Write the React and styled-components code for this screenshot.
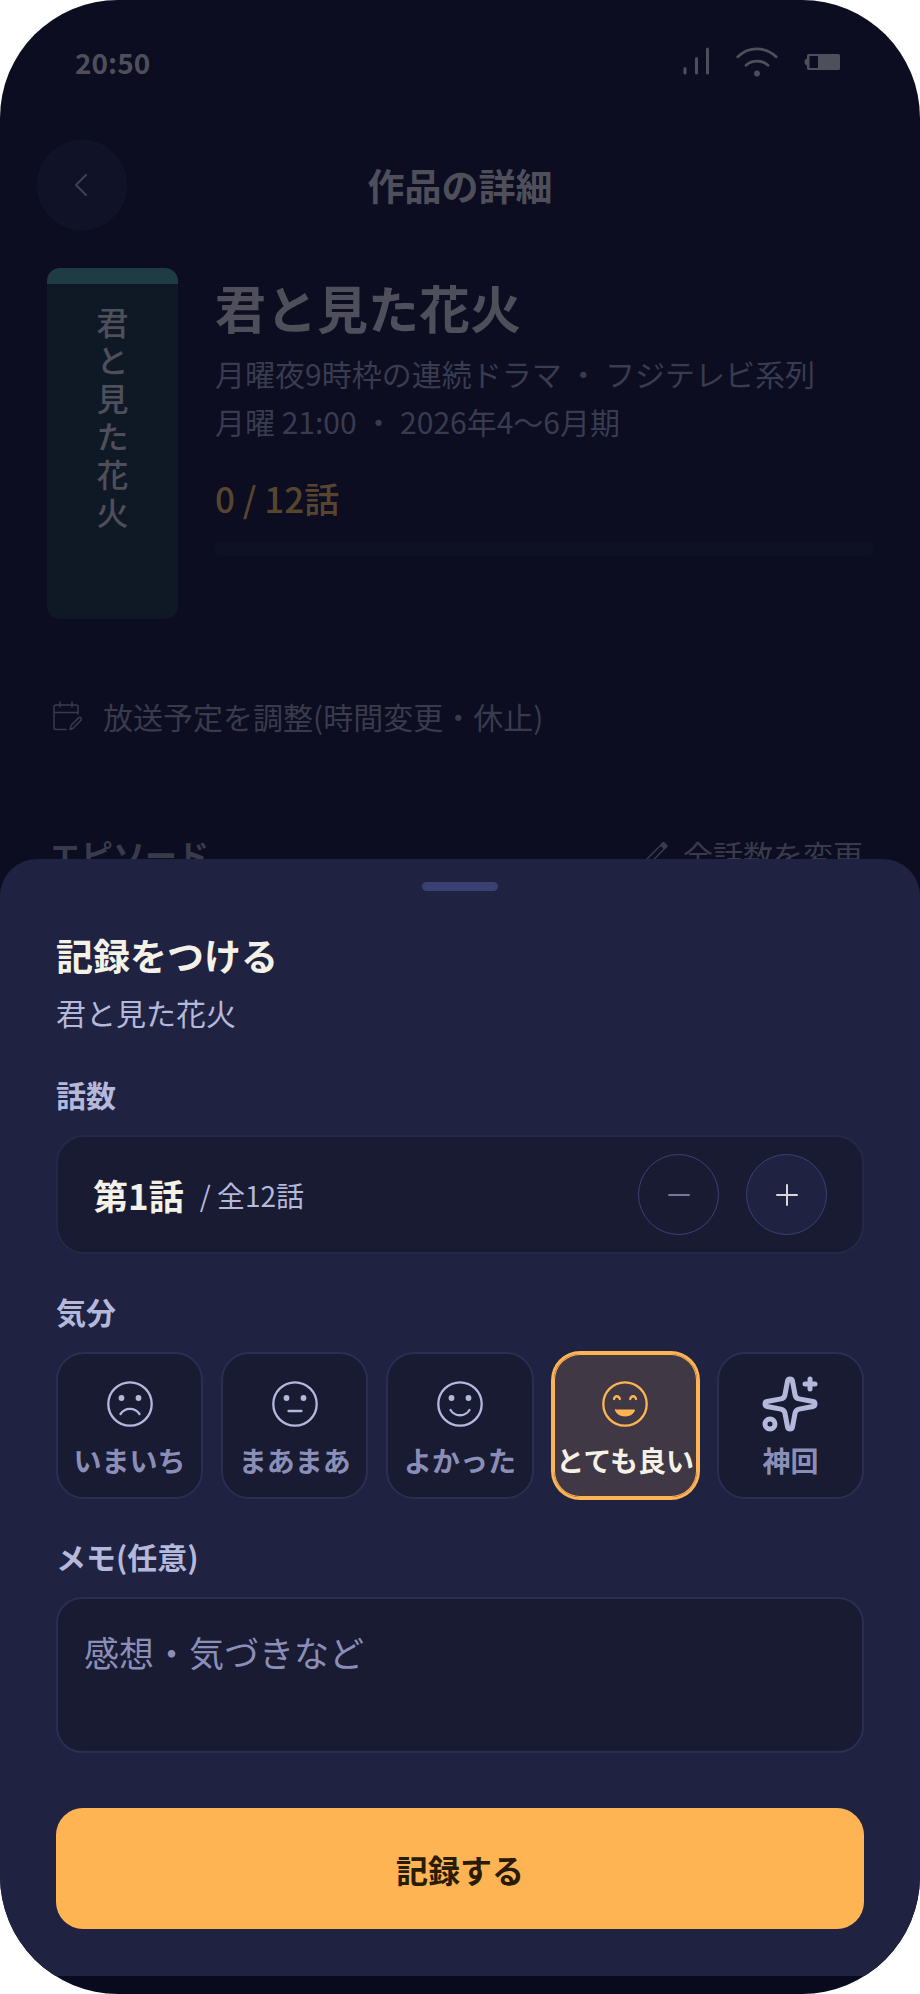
import React, { useState } from 'react'
import styled, { createGlobalStyle } from 'styled-components'
import { Sparkles } from 'lucide-react'

const GlobalStyle = createGlobalStyle`
    * {
        box-sizing: border-box;
    }

    body {
        margin: 0;
        background: #fff;
        font-family: "Noto Sans CJK JP", "Noto Sans", sans-serif;
    }

    button, textarea {
        font-family: inherit;
    }

    h1, h2, h3, p {
        margin: 0;
    }
`

// the detail screen and the sheet share a single grid cell
const Phone = styled.div`
    display: grid;
    grid-template: 1fr / minmax(0, 1fr);
    min-height: 100vh;
    border-radius: 118px;
    overflow: hidden;
    background: linear-gradient(#0c0d20 50%, #090a1e);
`

const Screen = styled.main`
    grid-area: 1 / 1;
    color: #4e4f5a;
`

const StatusBar = styled.div`
    display: flex;
    align-items: center;
    justify-content: space-between;
    height: 124px;
    padding: 0 80px 0 75px;
`

const Clock = styled.span`
    font-size: 28px;
    font-weight: 700;
`

const StatusIcons = styled.div`
    display: flex;
    align-items: center;
    gap: 26px;
`

const Header = styled.header`
    display: grid;
    grid-template-columns: 90px 1fr 90px;
    align-items: center;
    margin-top: 16px;
    padding: 0 37px;
`

const BackButton = styled.button`
    display: flex;
    align-items: center;
    justify-content: center;
    width: 90px;
    height: 90px;
    padding: 0;
    border: 1px solid #11172a;
    border-radius: 50%;
    background: #101227;
    color: #3f4158;
`

const HeaderTitle = styled.h1`
    font-size: 37px;
    line-height: 50px;
    font-weight: 700;
    text-align: center;
`

const Work = styled.section`
    display: grid;
    grid-template-columns: 131px 1fr;
    gap: 37px;
    margin-top: 38px;
    padding: 0 47px;
`

const Poster = styled.div`
    height: 351px;
    border-top: 16px solid #1f3c45;
    border-radius: 13px;
    background: #0f1925;
`

const PosterTitle = styled.div`
    width: 32px;
    margin: 18px auto 0;
    font-size: 32px;
    line-height: 38px;
    font-weight: 500;
    word-break: break-all;
`

const WorkInfo = styled.div`
    padding-top: 7px;
`

const WorkTitle = styled.h2`
    font-size: 51px;
    line-height: 64px;
    font-weight: 700;
`

const Meta = styled.p`
    margin-top: 10px;
    font-size: 30px;
    line-height: 48px;
    color: #393b50;
`

const Watched = styled.p`
    margin-top: 31px;
    font-size: 35px;
    line-height: 44px;
    font-weight: 500;
    color: #58452f;
`

const Track = styled.div`
    height: 14px;
    margin-top: 22px;
    border-radius: 4px;
    background: #0e1024;
`

const TextButton = styled.button`
    display: flex;
    align-items: center;
    gap: ${(props) => props.$gap};
    padding: 0;
    border: 0;
    background: none;
    color: #393b4c;
    font-size: 30px;
    line-height: 48px;
`

const ScheduleRow = styled.div`
    margin-top: 73px;
    padding: 0 53px;
`

const EpisodeRow = styled.div`
    display: flex;
    align-items: center;
    justify-content: space-between;
    margin-top: 90px;
    padding: 0 57px 0 49px;
    color: #393b4c;
`

const EpisodeTitle = styled.h3`
    font-size: 32px;
    line-height: 48px;
    font-weight: 700;
`

const Sheet = styled.form`
    grid-area: 1 / 1;
    align-self: end;
    display: flex;
    flex-direction: column;
    margin-bottom: 18px;
    padding: 23px 56px 47px;
    border-radius: 37px 37px 0 0;
    background: #1f2241;
    color: #b4b8da;
`

const Handle = styled.div`
    align-self: center;
    width: 76px;
    height: 9px;
    border-radius: 5px;
    background: #3b4073;
`

const SheetTitle = styled.h2`
    margin-top: 39px;
    font-size: 37px;
    line-height: 50px;
    font-weight: 700;
    color: #f4f1e6;
`

const SheetSubtitle = styled.p`
    margin: 12px 0 5px;
    font-size: 30px;
    line-height: 40px;
`

const FieldLabel = styled.label`
    margin: 37px 0 21px;
    font-size: 30px;
    line-height: 40px;
    font-weight: 700;
`

const Stepper = styled.div`
    display: flex;
    align-items: center;
    height: 119px;
    padding: 0 35px;
    border: 2px solid #242947;
    border-radius: 28px;
    background: #191b33;
`

const Episode = styled.output`
    font-size: 35px;
    font-weight: 700;
    color: #f4f1e6;
`

const Total = styled.span`
    flex: 1;
    margin-left: 16px;
    font-size: 28px;
`

const StepButton = styled.button`
    display: flex;
    align-items: center;
    justify-content: center;
    width: 81px;
    height: 81px;
    margin-left: 27px;
    padding: 0;
    border: 1px solid #3b4073;
    border-radius: 50%;
    background: #1f2241;
    color: #d8d6d6;

    &:first-of-type {
        margin-left: 0;
    }

    &:disabled {
        background: transparent;
        color: #76799b;
    }
`

const Moods = styled.div`
    display: grid;
    grid-template-columns: repeat(5, minmax(0, 1fr));
    gap: 18px;
`

const Mood = styled.label`
    display: flex;
    flex-direction: column;
    align-items: center;
    justify-content: center;
    gap: 8px;
    height: 147px;
    border: 2px solid ${(props) => (props.$selected ? '#ffb454' : '#2a2f52')};
    border-radius: 28px;
    background: ${(props) => (props.$selected ? '#403844' : '#191b33')};
    box-shadow: ${(props) =>
        props.$selected ? '0 0 0 1px #ffb454, inset 0 0 0 1px #ffb454' : 'none'};
    color: ${(props) => (props.$selected ? '#ffb454' : '#b4b8da')};
`

const HiddenRadio = styled.input.attrs({ type: 'radio' })`
    position: absolute;
    width: 1px;
    height: 1px;
    margin: 0;
    opacity: 0;
`

const MoodIcon = styled.span`
    display: flex;
    align-items: center;
    height: 60px;
`

const MoodName = styled.span`
    font-size: 28px;
    line-height: 36px;
    font-weight: 700;
    white-space: nowrap;
    color: ${(props) => (props.$selected ? '#f4f1e6' : '#8b8fb8')};
`

const Memo = styled.textarea`
    display: block;
    width: 100%;
    height: 156px;
    padding: 27px 26px;
    border: 2px solid #2a2f52;
    border-radius: 26px;
    background: #191b33;
    color: #f4f1e6;
    font-size: 35px;
    line-height: 52px;
    resize: none;

    &::placeholder {
        color: #8b8fb8;
        opacity: 1;
    }
`

const SubmitButton = styled.button`
    height: 121px;
    margin-top: 55px;
    padding: 0;
    border: 0;
    border-radius: 27px;
    background: #ffb454;
    color: #2a1c04;
    font-size: 32px;
    font-weight: 700;
`

const SignalIcon = () => (
    <svg width="28" height="30" viewBox="0 0 28 30" fill="none" stroke="currentColor" strokeWidth="3" strokeLinecap="round">
        <path d="M3 21.5v4.5M14.500 11.500v14.500M25.500 2v24" />
    </svg>
)

const WifiIcon = () => (
    <svg width="42" height="30" viewBox="0 0 42 30" fill="none" stroke="currentColor" strokeWidth="2.800" strokeLinecap="round">
        <path d="M1.800 9.800C12.500-.7 29.500-.7 40.200 9.800M10 18.200c6.200-5.500 15.800-5.500 22 0" />
        <circle cx="21" cy="26.500" r="2.900" fill="currentColor" stroke="none" />
    </svg>
)

const BatteryIcon = () => (
    <svg width="36" height="16" viewBox="0 0 36 16" fill="currentColor">
        <path d="M3 4.500v7C1.300 11.300.5 9.700.5 8S1.300 4.700 3 4.500z" />
        <path
            fillRule="evenodd"
            d="M4.500 0h30A1.500 1.500 0 0 1 36 1.500v13a1.500 1.500 0 0 1-1.500 1.500h-30A1.500 1.500 0 0 1 3 14.500v-13A1.500 1.500 0 0 1 4.500 0zM5.500 2v12h8.500V2z"
        />
    </svg>
)

const BackIcon = () => (
    <svg width="14" height="22" viewBox="0 0 14 22" fill="none" stroke="currentColor" strokeWidth="2" strokeLinecap="round" strokeLinejoin="round">
        <path d="M11 1 1 11l10 10" />
    </svg>
)

const CalendarEditIcon = () => (
    <svg width="29" height="30" viewBox="0 0 29 30" fill="none" stroke="currentColor" strokeWidth="1.500" strokeLinecap="round" strokeLinejoin="round">
        <path d="M13 28.500H3a2 2 0 0 1-2-2V6a2 2 0 0 1 2-2h20a2 2 0 0 1 2 2v7M1 11.500h24M7 1v5M19 1v5" />
        <path d="m17 28.500 1.200-4.200 7.400-7.400a1.600 1.600 0 0 1 2.300 2.300l-7.400 7.800z" />
    </svg>
)

const PencilIcon = () => (
    <svg width="26" height="26" viewBox="0 0 26 26" fill="none" stroke="currentColor" strokeWidth="1.500" strokeLinejoin="round">
        <path d="m2 24 1.500-5.500L20.500 1.500l3.500 3.500L7 22.500zM18 4l3.500 3.500" />
        <path d="m18 4 2.500-2.500L24 5l-2.500 2.500z" fill="currentColor" />
    </svg>
)

const MinusIcon = () => (
    <svg width="22" height="22" viewBox="0 0 22 22" stroke="currentColor" strokeWidth="2" strokeLinecap="round">
        <path d="M1 11h20" />
    </svg>
)

const PlusIcon = () => (
    <svg width="22" height="22" viewBox="0 0 22 22" stroke="currentColor" strokeWidth="2" strokeLinecap="round">
        <path d="M1 11h20M11 1v20" />
    </svg>
)

const Face = ({ children, eyes = true }) => (
    <svg width="46" height="46" viewBox="0 0 46 46" fill="none" stroke="currentColor" strokeWidth="2.300" strokeLinecap="round" strokeLinejoin="round">
        <circle cx="23" cy="23" r="21.700" />
        {eyes && (
            <g fill="currentColor" stroke="none">
                <circle cx="14.500" cy="17" r="2.900" />
                <circle cx="31.500" cy="17" r="2.900" />
            </g>
        )}
        {children}
    </svg>
)

const moods = [
    { name: 'いまいち', icon: <Face><path d="M13.500 33c4.500-6.800 14.500-6.800 19 0" /></Face> },
    { name: 'まあまあ', icon: <Face><path d="M16.500 30h13" /></Face> },
    { name: 'よかった', icon: <Face><path d="M13.500 29c4.500 7 14.500 7 19 0" /></Face> },
    {
        name: 'とても良い',
        icon: (
            <Face eyes={false}>
                <path d="M12 18c1-3.700 4.800-3.700 5.800 0M28.200 18c1-3.700 4.800-3.700 5.800 0" />
                <path d="M13.500 29h19c-1.500 8-17.500 8-19 0z" fill="currentColor" strokeWidth="1" />
            </Face>
        ),
    },
    { name: '神回', icon: <Sparkles size={60} /> },
]

const TOTAL = 12

export default function App() {
    const [episode, setEpisode] = useState(1)
    const [mood, setMood] = useState('とても良い')
    const [memo, setMemo] = useState('')

    return (
        <>
            <GlobalStyle />
            <Phone>
                <Screen>
                    <StatusBar>
                        <Clock>20:50</Clock>
                        <StatusIcons>
                            <SignalIcon />
                            <WifiIcon />
                            <BatteryIcon />
                        </StatusIcons>
                    </StatusBar>
                    <Header>
                        <BackButton type="button" aria-label="戻る">
                            <BackIcon />
                        </BackButton>
                        <HeaderTitle>作品の詳細</HeaderTitle>
                    </Header>
                    <Work>
                        <Poster>
                            <PosterTitle>君と見た花火</PosterTitle>
                        </Poster>
                        <WorkInfo>
                            <WorkTitle>君と見た花火</WorkTitle>
                            <Meta>
                                月曜夜9時枠の連続ドラマ ・ フジテレビ系列
                                <br />
                                月曜 21:00 ・ 2026年4〜6月期
                            </Meta>
                            <Watched>0 / {TOTAL}話</Watched>
                            <Track />
                        </WorkInfo>
                    </Work>
                    <ScheduleRow>
                        <TextButton type="button" $gap="21px">
                            <CalendarEditIcon />
                            放送予定を調整(時間変更・休止)
                        </TextButton>
                    </ScheduleRow>
                    <EpisodeRow>
                        <EpisodeTitle>エピソード</EpisodeTitle>
                        <TextButton type="button" $gap="14px">
                            <PencilIcon />
                            全話数を変更
                        </TextButton>
                    </EpisodeRow>
                </Screen>

                <Sheet onSubmit={(e) => e.preventDefault()}>
                    <Handle />
                    <SheetTitle>記録をつける</SheetTitle>
                    <SheetSubtitle>君と見た花火</SheetSubtitle>

                    <FieldLabel htmlFor="episode">話数</FieldLabel>
                    <Stepper>
                        <Episode id="episode">第{episode}話</Episode>
                        <Total>/ 全{TOTAL}話</Total>
                        <StepButton
                            type="button"
                            aria-label="減らす"
                            disabled={episode <= 1}
                            onClick={() => setEpisode(episode - 1)}
                        >
                            <MinusIcon />
                        </StepButton>
                        <StepButton
                            type="button"
                            aria-label="増やす"
                            disabled={episode >= TOTAL}
                            onClick={() => setEpisode(episode + 1)}
                        >
                            <PlusIcon />
                        </StepButton>
                    </Stepper>

                    <FieldLabel as="div" id="mood-label">気分</FieldLabel>
                    <Moods role="radiogroup" aria-labelledby="mood-label">
                        {moods.map(({ name, icon }) => (
                            <Mood key={name} $selected={mood === name}>
                                <HiddenRadio
                                    name="mood"
                                    value={name}
                                    checked={mood === name}
                                    onChange={() => setMood(name)}
                                />
                                <MoodIcon>{icon}</MoodIcon>
                                <MoodName $selected={mood === name}>{name}</MoodName>
                            </Mood>
                        ))}
                    </Moods>

                    <FieldLabel htmlFor="memo">メモ(任意)</FieldLabel>
                    <Memo
                        id="memo"
                        placeholder="感想・気づきなど"
                        value={memo}
                        onChange={(e) => setMemo(e.target.value)}
                    />
                    <SubmitButton type="submit">記録する</SubmitButton>
                </Sheet>
            </Phone>
        </>
    )
}
